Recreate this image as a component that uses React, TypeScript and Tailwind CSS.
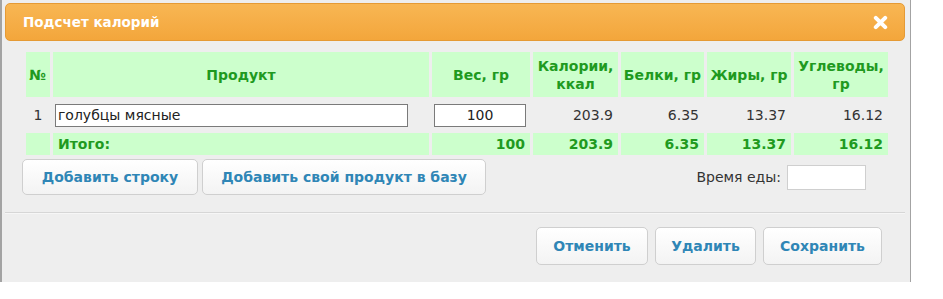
import React from "react";

const font = { fontFamily: '"DejaVu Sans", Verdana, sans-serif' };

function Btn({ children, className = "" }: { children: React.ReactNode; className?: string }) {
  return (
    <button
      className={
        "h-[36px] rounded-[5px] border border-[#cfcfcf] bg-gradient-to-b from-[#ffffff] to-[#f3f3f3] text-[14px] font-bold text-[#2f86b6] " +
        className
      }
    >
      {children}
    </button>
  );
}

export default function App() {
  const th = "bg-[#ccffcc] text-[#1f9a1f] font-bold text-[14px] leading-[18px] text-center align-middle";
  const td = "text-[14px] text-[#333] text-right pr-[5px] align-middle";
  const tt = "bg-[#ccffcc] text-[#1f9a1f] font-bold text-[14px] text-right pr-[5px] align-middle";
  return (
    <div className="bg-white w-[943px] h-[299px]" style={font}>
      <div className="w-[911px] h-[282px] bg-[#eeeeee] border-l-2 border-r border-[#a3a3a3] flex flex-col">
        <div className="mt-[3px] ml-[3px] mr-[5px] h-[38px] rounded-[5px] border border-[#e59a35] bg-gradient-to-b from-[#f8b653] to-[#f3a63b] flex items-center justify-between pl-[17px] pr-[16px]">
          <span className="text-white font-bold text-[13.5px]">Подсчет калорий</span>
          <svg width="15" height="15" viewBox="0 0 15 15">
            <path d="M2.8 2.8 L12.2 12.2 M12.2 2.8 L2.8 12.2" stroke="white" strokeWidth="4" strokeLinecap="round" />
          </svg>
        </div>
        <div className="ml-[21px] mt-[8px]">
          <table className="table-fixed border-separate border-spacing-[3px] w-[868px]">
            <colgroup>
              <col className="w-[24px]" />
              <col className="w-[376px]" />
              <col className="w-[98px]" />
              <col className="w-[85px]" />
              <col className="w-[83px]" />
              <col className="w-[84px]" />
              <col className="w-[94px]" />
            </colgroup>
            <thead>
              <tr className="h-[45px]">
                <th className={th + " !text-left pl-[3px]"}>№</th>
                <th className={th}>Продукт</th>
                <th className={th}>Вес, гр</th>
                <th className={th}>Калории,<br />ккал</th>
                <th className={th}>Белки, гр</th>
                <th className={th}>Жиры, гр</th>
                <th className={th}>Углеводы,<br />гр</th>
              </tr>
            </thead>
            <tbody>
              <tr className="h-[30px]">
                <td className="text-[14px] text-[#333] text-center align-middle">1</td>
                <td className="align-middle pl-[2px]">
                  <input
                    readOnly
                    value="голубцы мясные"
                    className="w-[353px] h-[23px] border border-[#7a7a7a] bg-white px-[2px] text-[14px] text-[#222] outline-none"
                    style={font}
                  />
                </td>
                <td className="align-middle pl-[2px]">
                  <input
                    readOnly
                    value="100"
                    className="w-[92px] h-[23px] border border-[#7a7a7a] bg-white text-center text-[14px] text-[#222] outline-none"
                    style={font}
                  />
                </td>
                <td className={td}>203.9</td>
                <td className={td}>6.35</td>
                <td className={td}>13.37</td>
                <td className={td}>16.12</td>
              </tr>
              <tr className="h-[22px]">
                <td className="bg-[#ccffcc]"></td>
                <td className={tt + " !text-left pl-[5px]"}>Итого:</td>
                <td className={tt}>100</td>
                <td className={tt}>203.9</td>
                <td className={tt}>6.35</td>
                <td className={tt}>13.37</td>
                <td className={tt}>16.12</td>
              </tr>
            </tbody>
          </table>
        </div>
        <div className="flex items-center ml-[20px] mt-[1px] h-[36px]">
          <Btn className="w-[176px]">Добавить строку</Btn>
          <Btn className="w-[284px] ml-[4px]">Добавить свой продукт в базу</Btn>
          <div className="ml-auto mr-[44px] flex items-center gap-[6px]">
            <span className="text-[14px] text-[#333]">Время еды:</span>
            <input readOnly className="w-[79px] h-[25px] border border-[#cfcfcf] bg-white outline-none" />
          </div>
        </div>
        <div className="mt-[17px] ml-[3px] mr-[5px] border-t border-[#d6d6d6] border-b border-b-[#f6f6f6]"></div>
        <div className="flex justify-end gap-[7px] mr-[28px] mt-[13px]">
          <Btn className="w-[112px] h-[38px]">Отменить</Btn>
          <Btn className="w-[101px] h-[38px]">Удалить</Btn>
          <Btn className="w-[119px] h-[38px]">Сохранить</Btn>
        </div>
      </div>
    </div>
  );
}
